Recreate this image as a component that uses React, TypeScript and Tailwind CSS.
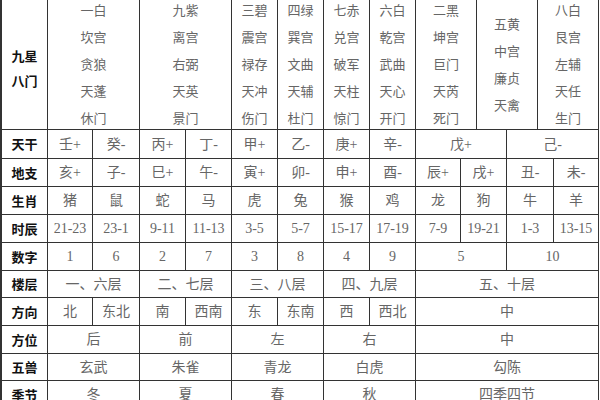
import React from 'react';

const FONT = '"Liberation Serif", "Noto Sans CJK SC", serif';
const LABEL_FONT = '"Noto Sans CJK SC", "Noto Sans", sans-serif';

type Cell = { t: string; span?: 1 | 2 | 4 };

const c = (t: string, span: 1 | 2 | 4 = 1): Cell => ({ t, span });

const rows: { label: string; h: string; cells: Cell[] }[] = [
  { label: '天干', h: 'h-[28px]', cells: ['壬+', '癸-', '丙+', '丁-', '甲+', '乙-', '庚+', '辛-'].map((t) => c(t)).concat([c('戊+', 2), c('己-', 2)]) },
  { label: '地支', h: 'h-[27px]', cells: ['亥+', '子-', '巳+', '午-', '寅+', '卯-', '申+', '酉-', '辰+', '戌+', '丑-', '未-'].map((t) => c(t)) },
  { label: '生肖', h: 'h-[27px]', cells: ['猪', '鼠', '蛇', '马', '虎', '兔', '猴', '鸡', '龙', '狗', '牛', '羊'].map((t) => c(t)) },
  { label: '时辰', h: 'h-[27px]', cells: ['21-23', '23-1', '9-11', '11-13', '3-5', '5-7', '15-17', '17-19', '7-9', '19-21', '1-3', '13-15'].map((t) => c(t)) },
  { label: '数字', h: 'h-[27px]', cells: ['1', '6', '2', '7', '3', '8', '4', '9'].map((t) => c(t)).concat([c('5', 2), c('10', 2)]) },
  { label: '楼层', h: 'h-[26px]', cells: [c('一、六层', 2), c('二、七层', 2), c('三、八层', 2), c('四、九层', 2), c('五、十层', 4)] },
  { label: '方向', h: 'h-[27px]', cells: ['北', '东北', '南', '西南', '东', '东南', '西', '西北'].map((t) => c(t)).concat([c('中', 4)]) },
  { label: '方位', h: 'h-[27px]', cells: [c('后', 2), c('前', 2), c('左', 2), c('右', 2), c('中', 4)] },
  { label: '五兽', h: 'h-[26px]', cells: [c('玄武', 2), c('朱雀', 2), c('青龙', 2), c('白虎', 2), c('勾陈', 4)] },
  { label: '季节', h: 'h-[27px]', cells: [c('冬', 2), c('夏', 2), c('春', 2), c('秋', 2), c('四季四节', 4)] },
];

const stars: string[][] = [
  ['一白', '坎宫', '贪狼', '天蓬', '休门'],
  ['九紫', '离宫', '右弼', '天英', '景门'],
  ['三碧', '震宫', '禄存', '天冲', '伤门'],
  ['四绿', '巽宫', '文曲', '天辅', '杜门'],
  ['七赤', '兑宫', '破军', '天柱', '惊门'],
  ['六白', '乾宫', '武曲', '天心', '开门'],
  ['二黑', '坤宫', '巨门', '天芮', '死门'],
  ['五黄', '中宫', '廉贞', '天禽'],
  ['八白', '艮宫', '左辅', '天任', '生门'],
];

function Label({ children, className = '' }: { children: React.ReactNode; className?: string }) {
  return (
    <div
      className={`bg-white flex flex-col items-center justify-center text-[13px] font-bold text-[#111] ${className}`}
      style={{ fontFamily: LABEL_FONT }}
    >
      {children}
    </div>
  );
}

export default function App() {
  return (
    <div className="w-[600px] h-[400px] overflow-hidden bg-white">
      <div className="w-[599px] bg-[#333] pl-[2px] pr-px flex flex-col gap-px">
        {/* header: 九星八门 */}
        <div className="grid grid-cols-[45px_91px_91px_45px_45px_45px_45px_60px_60px_60px] gap-px h-[129px]">
          <Label className="leading-[25px] pt-[6px]">
            <span>九星</span>
            <span>八门</span>
          </Label>
          {stars.map((col, i) => (
            <div
              key={i}
              className="bg-white flex flex-col items-center justify-center text-[13px] leading-[27px] text-[#666] overflow-hidden"
              style={{ fontFamily: FONT }}
            >
              {col.map((t) => (
                <span key={t} className="shrink-0">{t}</span>
              ))}
            </div>
          ))}
        </div>

        {/* body rows */}
        <div className="grid grid-cols-[45px_44px_46px_45px_45px_45px_45px_45px_45px_44px_45px_46px_44px] gap-px">
          {rows.map((r) => (
            <React.Fragment key={r.label}>
              <Label className={r.h}>{r.label}</Label>
              {r.cells.map((cell, j) => (
                <div
                  key={j}
                  className={`bg-white flex items-center justify-center text-[13px] text-[#666] ${r.h} ${
                    cell.span === 2 ? 'col-span-2' : cell.span === 4 ? 'col-span-4' : ''
                  }`}
                  style={{ fontFamily: FONT }}
                >
                  <span className="text-[14px]">{cell.t}</span>
                </div>
              ))}
            </React.Fragment>
          ))}
        </div>
      </div>
    </div>
  );
}
